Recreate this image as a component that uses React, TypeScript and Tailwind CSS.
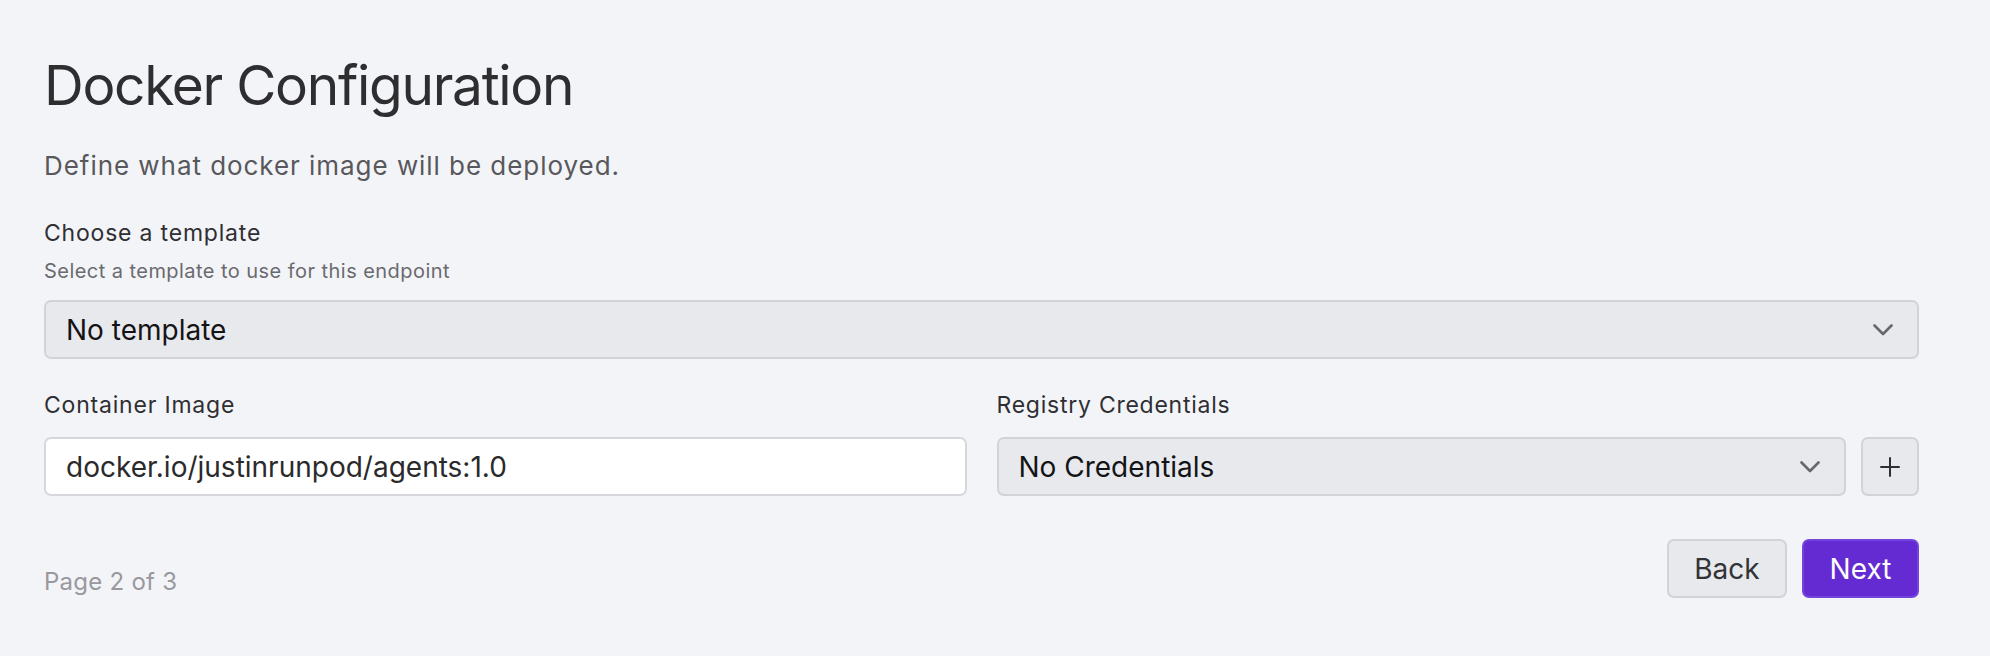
import React, { useState } from "react";

// Small chevron used on the right side of the select boxes
const Chevron: React.FC = () => (
  <svg width="20" height="12" viewBox="0 0 20 12" fill="none" className="shrink-0">
    <polyline
      points="1.5,1.5 10,10 18.5,1.5"
      stroke="#66666b"
      strokeWidth="2.6"
      strokeLinecap="round"
      strokeLinejoin="round"
    />
  </svg>
);

const PlusIcon: React.FC = () => (
  <svg width="20" height="20" viewBox="0 0 20 20" fill="none">
    <line x1="10" y1="1" x2="10" y2="19" stroke="#2f2f33" strokeWidth="2" strokeLinecap="round" />
    <line x1="1" y1="10" x2="19" y2="10" stroke="#2f2f33" strokeWidth="2" strokeLinecap="round" />
  </svg>
);

interface SelectBoxProps {
  value: string;
  className?: string;
}

const SelectBox: React.FC<SelectBoxProps> = ({ value, className = "" }) => (
  <button
    type="button"
    className={`flex h-[59px] items-center justify-between rounded-[7px] border-2 border-[#d2d3d7] bg-[#e8e9ed] pl-[20px] pr-[24px] text-left ${className}`}
  >
    <span className="text-[28px] leading-[34px] text-[#141416]">{value}</span>
    <Chevron />
  </button>
);

export default function App() {
  const [image, setImage] = useState("docker.io/justinrunpod/agents:1.0");

  return (
    <div
      className="min-h-[656px] w-full bg-[#f3f4f8] pl-[44px] pr-[71px] pt-[52px]"
      style={{ fontFamily: "Inter, 'Noto Sans', sans-serif" }}
    >
      {/* Header */}
      <h1 className="text-[55px] leading-[66px] font-normal tracking-[-1.3px] text-[#2e2e31]">
        Docker Configuration
      </h1>
      <p className="mt-[32px] text-[26px] leading-[32px] tracking-[0.95px] text-[#58585c]">
        Define what docker image will be deployed.
      </p>

      {/* Template */}
      <div className="mt-[37px]">
        <label className="block text-[23px] leading-[28px] tracking-[0.8px] text-[#2f2f33]">
          Choose a template
        </label>
        <p className="mt-[12px] text-[20px] leading-[24px] tracking-[0.45px] text-[#6a6a6f]">
          Select a template to use for this endpoint
        </p>
        <SelectBox value="No template" className="mt-[17px] w-full" />
      </div>

      {/* Image + credentials */}
      <div className="mt-[32px] grid grid-cols-2 gap-[30px]">
        <div>
          <label className="block text-[23px] leading-[28px] tracking-[0.8px] text-[#2f2f33]">
            Container Image
          </label>
          <input
            value={image}
            onChange={(e) => setImage(e.target.value)}
            className="mt-[18px] h-[59px] w-full rounded-[7px] border-2 border-[#d6d7db] bg-white px-[20px] text-[28px] text-[#2a2a2d] outline-none"
          />
        </div>
        <div>
          <label className="block text-[23px] leading-[28px] tracking-[0.75px] text-[#2f2f33]">
            Registry Credentials
          </label>
          <div className="mt-[18px] flex gap-[15px]">
            <SelectBox value="No Credentials" className="flex-1" />
            <button
              type="button"
              className="flex h-[59px] w-[58px] items-center justify-center rounded-[7px] border-2 border-[#d2d3d7] bg-[#e8e9ed]"
            >
              <PlusIcon />
            </button>
          </div>
        </div>
      </div>

      {/* Footer */}
      <div className="mt-[43px] flex items-end justify-between">
        <span className="mb-[-2px] text-[24px] leading-[36px] tracking-[0.25px] text-[#98989d]">
          Page 2 of 3
        </span>
        <div className="flex gap-[15px]">
          <button
            type="button"
            className="h-[59px] w-[120px] rounded-[7px] border-2 border-[#d2d3d7] bg-[#e8e9ed] text-[28px] text-[#333336]"
          >
            Back
          </button>
          <button
            type="button"
            className="h-[59px] w-[117px] rounded-[7px] border-2 border-[#7445dc] bg-[#652bd2] text-[28px] text-white"
          >
            Next
          </button>
        </div>
      </div>
    </div>
  );
}
